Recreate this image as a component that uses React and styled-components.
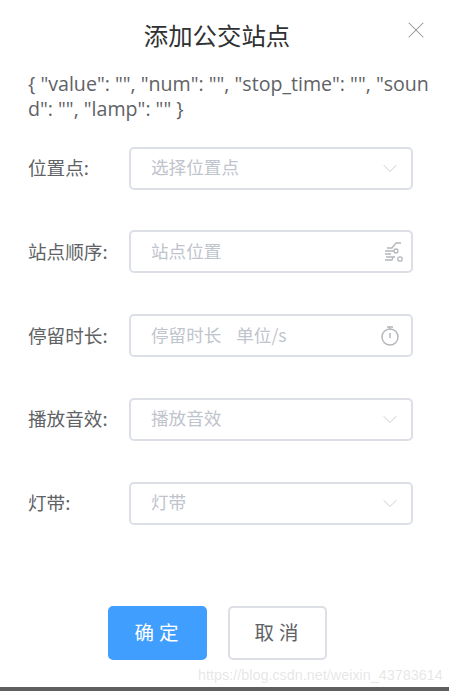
import React from "react";
import styled, { createGlobalStyle } from "styled-components";
import { ChevronDown, X } from "lucide-react";

const GlobalStyle = createGlobalStyle`
  html, body {
    margin: 0;
    padding: 0;
    background: #fff;
  }
  * {
    box-sizing: border-box;
  }
`;

const Page = styled.div`
  position: relative;
  width: 449px;
  height: 691px;
  overflow: hidden;
  display: flex;
  flex-direction: column;
  background: #fff;
  font-family: "Open Sans", "Noto Sans CJK SC", sans-serif;
  color: #606266;
`;

const Title = styled.h2`
  margin: 18px 0 0;
  padding-right: 15px;
  height: 34px;
  line-height: 34px;
  text-align: center;
  font-family: "Noto Sans CJK SC", sans-serif;
  font-size: 24.4px;
  font-weight: 400;
  color: #303133;
`;

const CloseButton = styled.button`
  position: absolute;
  top: 16px;
  left: 402px;
  width: 28px;
  height: 28px;
  padding: 0;
  border: 0;
  background: none;
  color: #909399;
  display: flex;
  align-items: center;
  justify-content: center;
`;

const Debug = styled.p`
  margin: 20px 0 0;
  padding: 0 18px 0 28px;
  font-family: "Open Sans", sans-serif;
  font-size: 19.6px;
  line-height: 24.5px;
  height: 49px;
  word-break: break-all;
  color: #606266;
`;

const Form = styled.form`
  margin-top: 25.5px;
  display: flex;
  flex-direction: column;
  gap: 40.75px;
`;

const Row = styled.div`
  display: flex;
  align-items: center;
  padding-left: 28px;
  height: 43px;
`;

const Label = styled.label`
  width: 101px;
  padding-bottom: 3px;
  font-family: "Noto Sans CJK SC", sans-serif;
  font-size: 18.6px;
  color: #606266;
`;

const Field = styled.div`
  width: 284px;
  height: 43px;
  display: flex;
  align-items: center;
  justify-content: space-between;
  padding: 0 6px 0 20px;
  border: 2px solid #dcdfe6;
  border-radius: 5px;
  background: #fff;
  font-family: "Noto Sans CJK SC", "Open Sans", sans-serif;
  font-size: 17.6px;
  color: #c0c4cc;
`;

const Placeholder = styled.span`
  padding-bottom: 3px;
  white-space: pre;
  word-spacing: 1px;
`;

const IconSlot = styled.span`
  display: flex;
  align-items: center;
  justify-content: center;
  flex: none;
  width: 24px;
  height: 30px;
  margin-right: ${(p) => p.$shift || 0}px;
`;

const Actions = styled.div`
  margin-top: 81px;
  padding-left: 108px;
  display: flex;
  gap: 21px;
`;

const Button = styled.button`
  width: 99px;
  height: 54px;
  padding: 0 0 3px 3px;
  border-radius: 5px;
  border: 2px solid ${(p) => (p.$primary ? "#409eff" : "#dcdfe6")};
  background: ${(p) => (p.$primary ? "#409eff" : "#fff")};
  color: ${(p) => (p.$primary ? "#fff" : "#606266")};
  font-family: "Noto Sans CJK SC", sans-serif;
  font-size: 19.5px;
  letter-spacing: 5px;
`;

const Watermark = styled.span`
  position: absolute;
  left: 198px;
  top: 667px;
  font-family: "Liberation Sans", sans-serif;
  font-size: 14.4px;
  color: rgba(200, 200, 200, 0.45);
  white-space: nowrap;
`;

const BottomBar = styled.div`
  margin-top: auto;
  height: 4px;
  background: #5f5f5f;
`;

const RouteIcon = () => (
  <svg width="22" height="24" viewBox="0 0 22 24" fill="none" stroke="#b4b7bb" strokeWidth="1.3">
    <path d="M5 8h5l4-5h5M3 11h9M3 14h6M4 17h9M3 20h7l1-3" />
    <circle cx="14" cy="11" r="2" fill="#fff" />
    <circle cx="18" cy="19" r="2.2" fill="#fff" />
  </svg>
);

const TimerIcon = () => (
  <svg width="20" height="24" viewBox="0 0 20 24" fill="none" stroke="#b4b7bb" strokeWidth="1.5">
    <circle cx="10" cy="13" r="8" />
    <path d="M7 3h6M10 3v2M10 9v5" />
  </svg>
);

const Arrow = () => <ChevronDown size={33} strokeWidth={0.7} color="#b4b7bb" />;

const rows = [
  { label: "位置点:", placeholder: "选择位置点", icon: <Arrow />, shift: 3 },
  { label: "站点顺序:", placeholder: "站点位置", icon: <RouteIcon /> },
  { label: "停留时长:", placeholder: "停留时长   单位/s", icon: <TimerIcon />, shift: 3 },
  { label: "播放音效:", placeholder: "播放音效", icon: <Arrow />, shift: 3 },
  { label: "灯带:", placeholder: "灯带", icon: <Arrow />, shift: 3 },
];

const App = () => {
  return (
    <Page>
      <GlobalStyle />
      <Title>添加公交站点</Title>
      <CloseButton type="button">
        <X size={28} strokeWidth={0.9} />
      </CloseButton>
      <Debug>{'{ "value": "", "num": "", "stop_time": "", "sound": "", "lamp": "" }'}</Debug>
      <Form>
        {rows.map((row) => (
          <Row key={row.label}>
            <Label>{row.label}</Label>
            <Field>
              <Placeholder>{row.placeholder}</Placeholder>
              <IconSlot $shift={row.shift}>{row.icon}</IconSlot>
            </Field>
          </Row>
        ))}
      </Form>
      <Actions>
        <Button type="button" $primary>确定</Button>
        <Button type="button">取消</Button>
      </Actions>
      <Watermark>https://blog.csdn.net/weixin_43783614</Watermark>
      <BottomBar />
    </Page>
  );
};

export default App;
